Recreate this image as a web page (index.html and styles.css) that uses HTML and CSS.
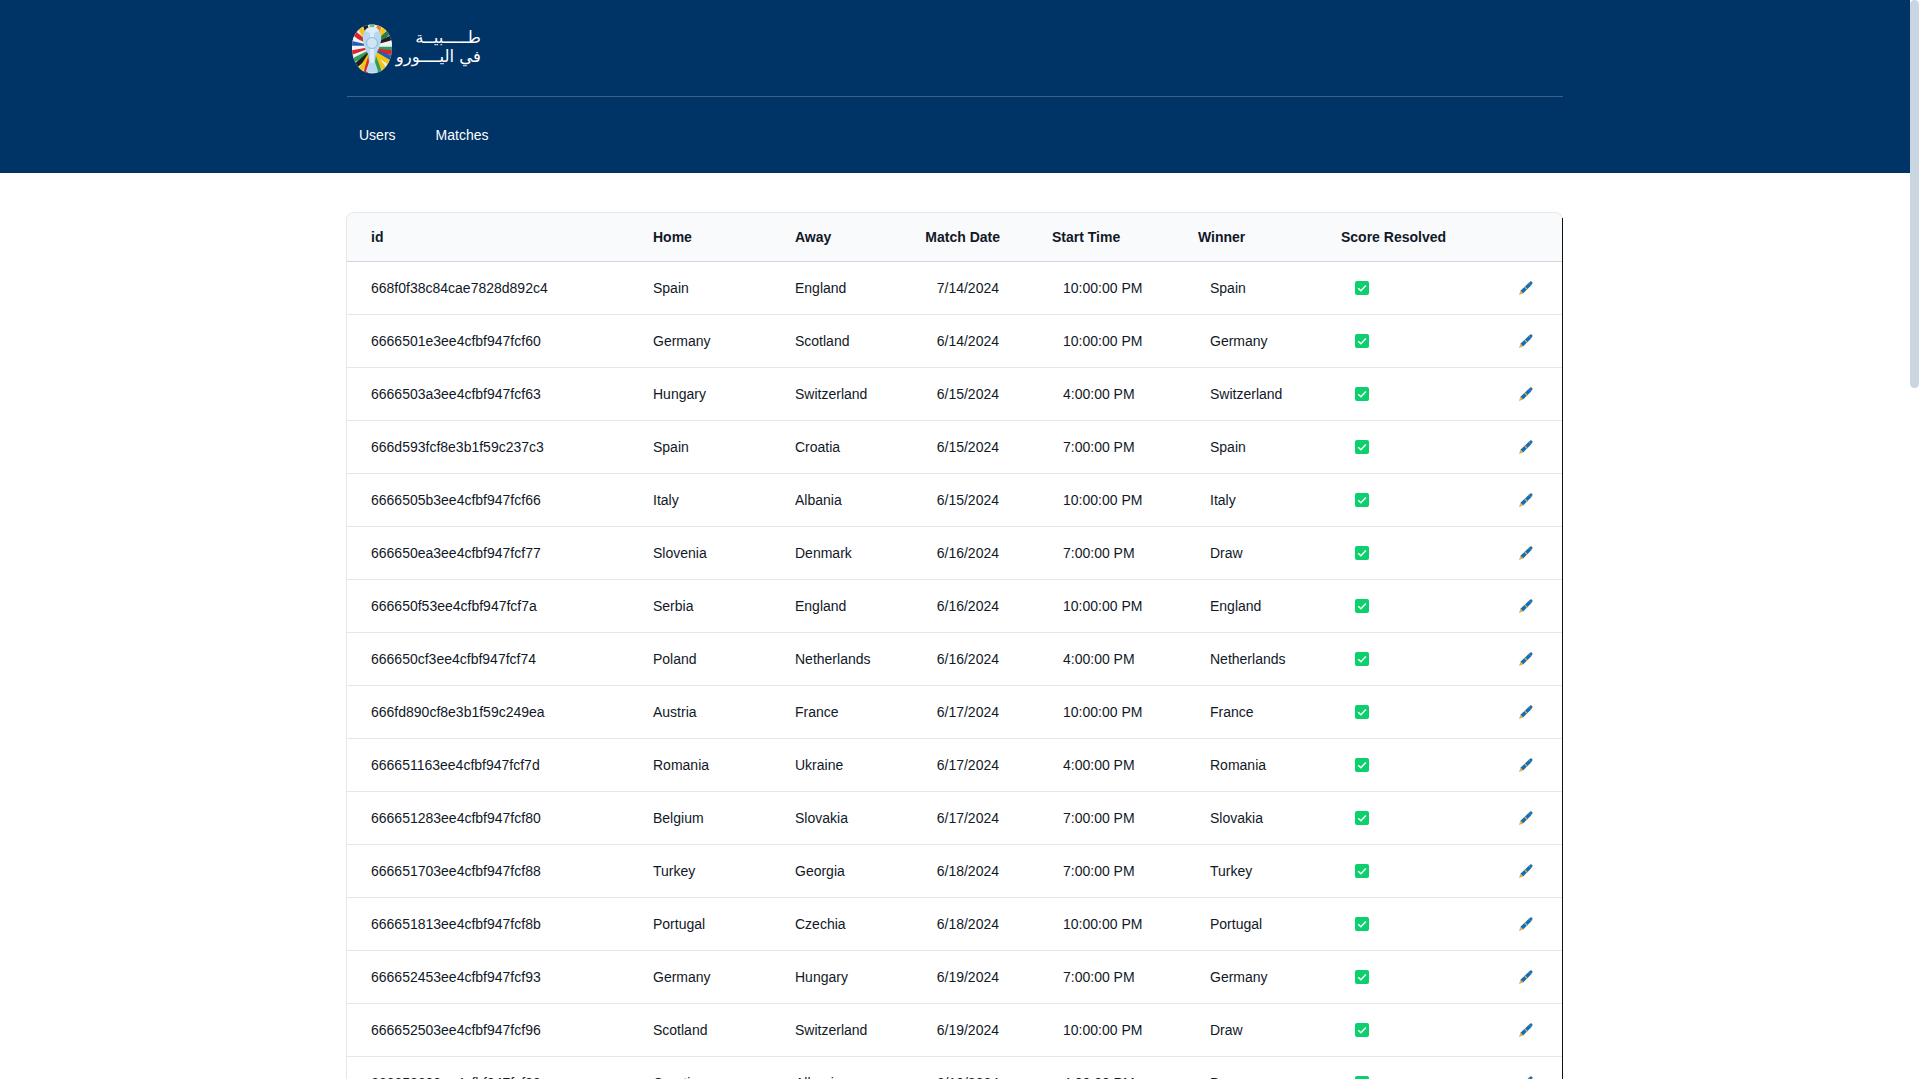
FILE: index.html
```html
<!DOCTYPE html>
<html lang="en">
<head>
<meta charset="utf-8">
<title>Matches</title>
<link rel="stylesheet" href="styles.css">
</head>
<body>
<header class="top">
  <div class="wrap">
    <div class="brand">
      <svg class="trophy" viewBox="0 0 40 50" width="40" height="50" aria-hidden="true">
        <defs><clipPath id="egg"><path d="M20 .5C31 .5 40 9 40 23c0 15-8 26.500-20 26.500S0 38 0 23C0 9 9 .5 20 .5z"/></clipPath></defs>
        <g clip-path="url(#egg)" fill="none" stroke-width="4.600">
          <rect width="40" height="50" fill="#e8eef2"/>
          <path d="M20 24 13 0" stroke="#1f1f1f"/>
          <path d="M20 24 7 2" stroke="#f6c413"/>
          <path d="M20 24 1 8" stroke="#d9262c"/>
          <path d="M20 24-2 14" stroke="#f2f4f6"/>
          <path d="M20 24-2 19" stroke="#1d5fb0"/>
          <path d="M20 24H-2" stroke="#f2f4f6"/>
          <path d="M20 25-2 29" stroke="#d9262c"/>
          <path d="M20 26-2 34" stroke="#f2f4f6"/>
          <path d="M20 27-2 38" stroke="#2f9e58"/>
          <path d="M20 28 1 44" stroke="#1f1f1f"/>
          <path d="M20 28 6 50" stroke="#f6c413"/>
          <path d="M20 28 12 54" stroke="#d9262c"/>
          <path d="M20 24 20 0" stroke="#79b86e"/>
          <path d="M20 24 28 0" stroke="#e9842a"/>
          <path d="M20 24 34 2" stroke="#f6c413"/>
          <path d="M20 24 39 6" stroke="#2c7a4c"/>
          <path d="M20 24 42 12" stroke="#1f1f1f"/>
          <path d="M20 24 42 18" stroke="#f2f4f6"/>
          <path d="M20 25h22" stroke="#2f9e58"/>
          <path d="M20 26 42 29" stroke="#d9262c"/>
          <path d="M20 27 42 35" stroke="#1d5fb0"/>
          <path d="M20 28 42 41" stroke="#f6c413"/>
          <path d="M20 28 36 50" stroke="#f6c413"/>
          <path d="M20 28 30 54" stroke="#2f9e58"/>
          <path d="M13 6h14l2 5c1 7-2 14-5 19l-1 8 3 9c0 2-12 2-12 0l3-9-1-8c-3-5-6-12-5-19z" fill="#b7d8ee"/>
          <ellipse cx="20" cy="6" rx="6.500" ry="3" fill="#dcedf7"/>
          <path d="M18 9h4v30h-4z" fill="#dcedf7"/>
          <circle cx="20" cy="19" r="5.500" fill="#cfe5f4" stroke="#7fb0d2" stroke-width=".8"/>
        </g>
      </svg>
      <div class="brand-text" lang="ar" dir="rtl">
        <span>طـــــبيــة</span>
        <span>في اليــــورو</span>
      </div>
    </div>
    <nav class="nav">
      <a class="nav-link" href="#">Users</a>
      <a class="nav-link" href="#">Matches</a>
    </nav>
  </div>
</header>
<main class="page">
  <div class="card">
    <table class="matches">
      <colgroup>
        <col class="c-id"><col class="c-home"><col class="c-away"><col class="c-date"><col class="c-time"><col class="c-win"><col class="c-res"><col class="c-edit">
      </colgroup>
      <thead>
        <tr><th>id</th><th>Home</th><th>Away</th><th class="date">Match Date</th><th class="time">Start Time</th><th>Winner</th><th>Score Resolved</th><th></th></tr>
      </thead>
      <tbody id="rows"></tbody>
    </table>
  </div>
</main>
<div class="scrollbar"><div class="thumb"></div></div>
<script src="app.js"></script>
</body>
</html>
```

FILE: styles.css
```css
* { box-sizing: border-box; }
html { background: #fff; overflow: hidden; }
body {
  margin: 0;
  padding-right: 9px;
  font-family: "Liberation Sans", Arial, sans-serif;
  font-size: 14px;
  color: #111827;
}
.scrollbar { position: fixed; top: 0; right: 0; bottom: 0; width: 9px; background: #fff; }
.thumb { height: 388px; background: #c9d5e0; border-radius: 5px; }
.top { background: #003366; height: 173px; }
.wrap { width: 1216px; margin-left: 347px; }
.brand {
  height: 97px;
  padding: 24px 0 0 5px;
  display: flex;
  gap: 0;
  border-bottom: 1px solid #3d6187;
}
.trophy { flex: none; }
.brand-text {
  width: 89px;
  display: flex;
  flex-direction: column;
  color: #fff;
  font-family: "DejaVu Sans", sans-serif;
  font-size: 16.500px;
  line-height: 19px;
  text-align: right;
  white-space: nowrap;
  margin-top: 4px;
}
.nav { display: flex; gap: 40px; padding: 30px 12px 0; }
.nav-link { color: #fff; text-decoration: none; line-height: 16px; }
.page { padding: 39px 0 0 346px; }
.card {
  position: relative;
  width: 1217px;
  border: 1px solid #e5e7eb;
  border-bottom: 0;
  border-radius: 8px 8px 0 0;
}
.card::after {
  content: "";
  position: absolute;
  top: 5px;
  right: -1px;
  bottom: 0;
  width: 1px;
  background: #111;
}
.matches { width: 100%; border-collapse: separate; border-spacing: 0; table-layout: fixed; }
.c-id { width: 282px; } .c-home { width: 142px; } .c-away { width: 154px; }
.c-date { width: 75px; } .c-time { width: 174px; } .c-win { width: 143px; }
.c-res { width: 192px; } .c-edit { width: 53px; }
th {
  height: 49px;
  background: #f9fafb;
  text-align: left;
  font-weight: 700;
  padding: 0 0 0 24px;
  border-bottom: 1px solid #d1d5db;
  white-space: nowrap;
}
th:first-child { border-top-left-radius: 7px; }
th:last-child { border-top-right-radius: 7px; }
td {
  height: 53px;
  padding: 0 0 0 24px;
  border-bottom: 1px solid #e5e7eb;
  white-space: nowrap;
}
.matches .date { text-align: right; padding: 0; }
.matches td.date { padding-right: 1px; }
.matches .time { padding-left: 52px; }
.matches .t { padding-left: 63px; }
.matches .w { padding-left: 36px; }
.matches .c { padding-left: 38px; }
.matches .e { padding-left: 10px; }
.ico { display: block; }
```

FILE: app.js
```js
const data = [
["668f0f38c84cae7828d892c4","Spain","England","7/14/2024","10:00:00 PM","Spain"],
["6666501e3ee4cfbf947fcf60","Germany","Scotland","6/14/2024","10:00:00 PM","Germany"],
["6666503a3ee4cfbf947fcf63","Hungary","Switzerland","6/15/2024","4:00:00 PM","Switzerland"],
["666d593fcf8e3b1f59c237c3","Spain","Croatia","6/15/2024","7:00:00 PM","Spain"],
["6666505b3ee4cfbf947fcf66","Italy","Albania","6/15/2024","10:00:00 PM","Italy"],
["666650ea3ee4cfbf947fcf77","Slovenia","Denmark","6/16/2024","7:00:00 PM","Draw"],
["666650f53ee4cfbf947fcf7a","Serbia","England","6/16/2024","10:00:00 PM","England"],
["666650cf3ee4cfbf947fcf74","Poland","Netherlands","6/16/2024","4:00:00 PM","Netherlands"],
["666fd890cf8e3b1f59c249ea","Austria","France","6/17/2024","10:00:00 PM","France"],
["666651163ee4cfbf947fcf7d","Romania","Ukraine","6/17/2024","4:00:00 PM","Romania"],
["666651283ee4cfbf947fcf80","Belgium","Slovakia","6/17/2024","7:00:00 PM","Slovakia"],
["666651703ee4cfbf947fcf88","Turkey","Georgia","6/18/2024","7:00:00 PM","Turkey"],
["666651813ee4cfbf947fcf8b","Portugal","Czechia","6/18/2024","10:00:00 PM","Portugal"],
["666652453ee4cfbf947fcf93","Germany","Hungary","6/19/2024","7:00:00 PM","Germany"],
["666652503ee4cfbf947fcf96","Scotland","Switzerland","6/19/2024","10:00:00 PM","Draw"],
["666652603ee4cfbf947fcf99","Croatia","Albania","6/19/2024","4:00:00 PM","Draw"]
];
const check = '<svg class="ico" width="14" height="14" viewBox="0 0 14 14"><rect width="14" height="14" rx="2" fill="#0ccf6e"/><path d="M3.200 7.300 5.900 9.800l5-5.400" fill="none" stroke="#fff" stroke-width="1.500"/></svg>';
const pen = '<svg class="ico" width="14" height="14" viewBox="0 0 14 14"><path d="M1.400 9.800 9.500 2.100l2.600 2.500-8 7.800z" fill="#0f70b7"/><path d="M9.500 2.100 11.400.4c.9-.7 2.600.8 2 1.900L12.100 4.600z" fill="#2c6a9c"/><path d="M5.700 5.900 8.300 8.500" stroke="#f2a93b" stroke-width="1.300"/><path d="M1.400 9.800 0 14l4.100-1.600z" fill="#f2a93b"/></svg>';
document.getElementById("rows").innerHTML = data.map(r =>
  `<tr><td>${r[0]}</td><td>${r[1]}</td><td>${r[2]}</td><td class="date">${r[3]}</td><td class="t">${r[4]}</td><td class="w">${r[5]}</td><td class="c">${check}</td><td class="e">${pen}</td></tr>`
).join("");
```
